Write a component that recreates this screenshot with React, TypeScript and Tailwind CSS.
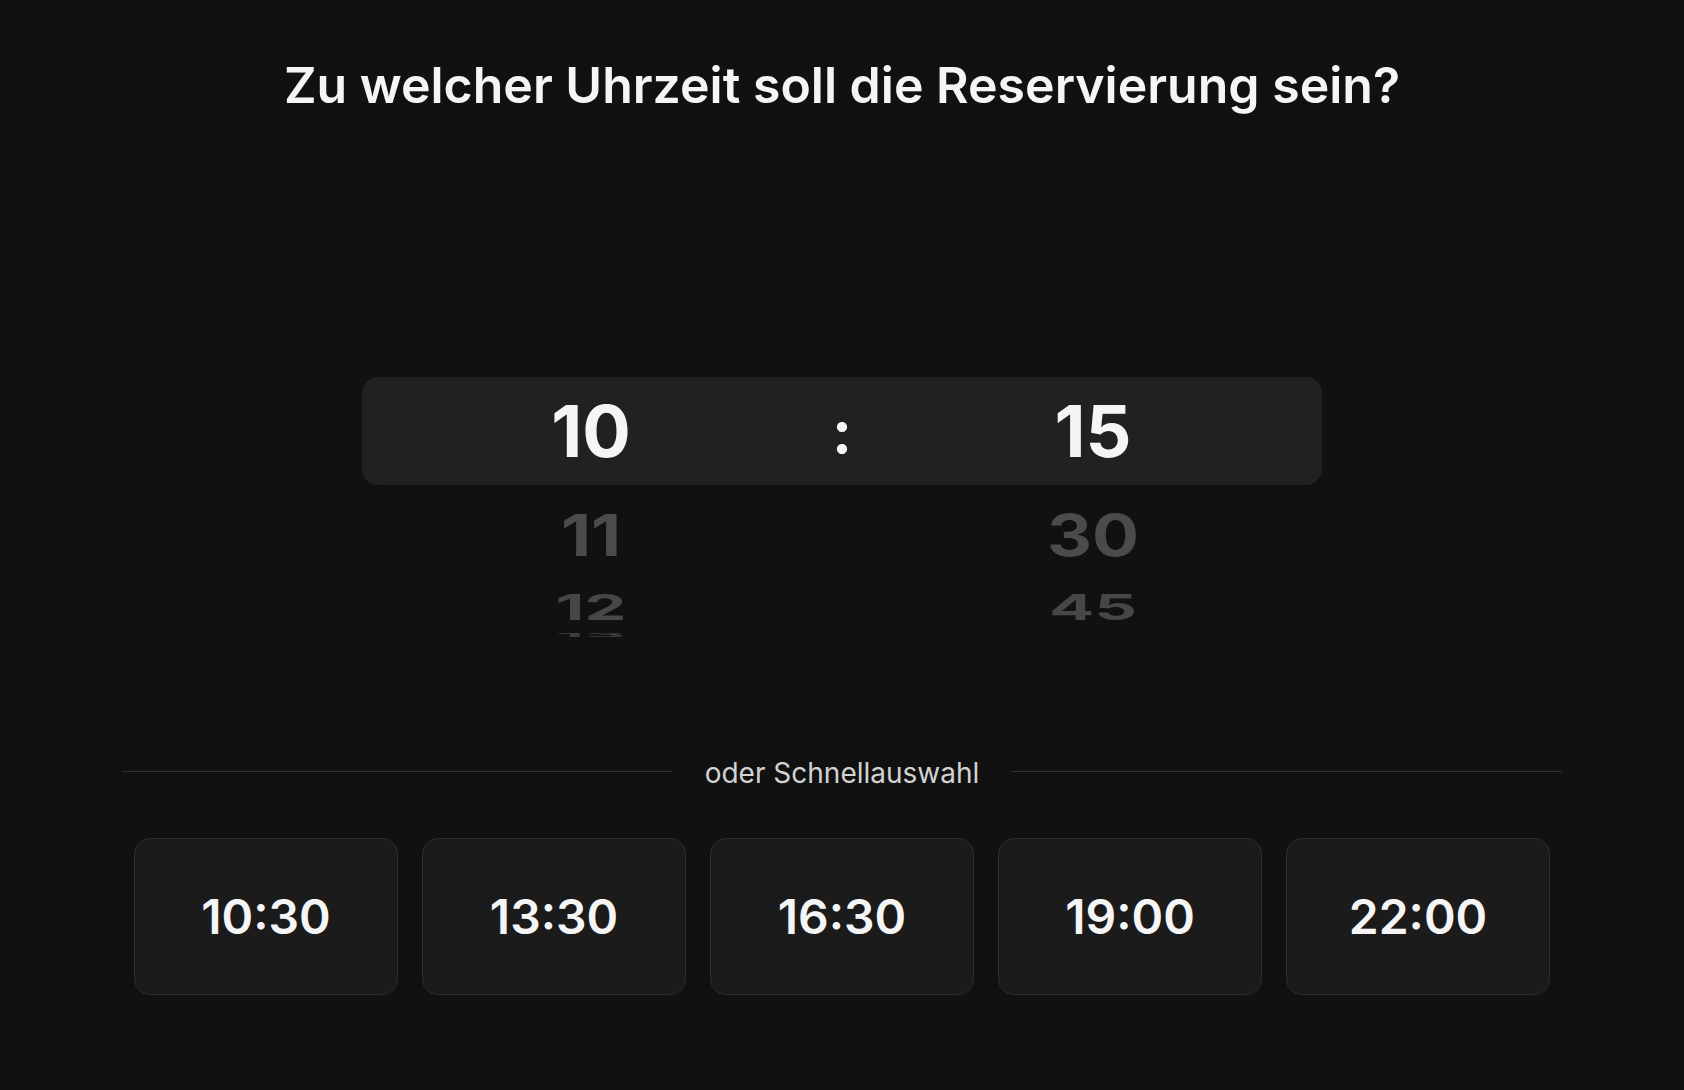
// Reservation time step: wheel-style hour/minute picker plus quick-pick buttons.

const QUICK_TIMES = ["10:30", "13:30", "16:30", "19:00", "22:00"];

// Rows that roll away below the selected one on the wheel.
const TRAILING_ROWS = [
  { hour: "11", minute: "30", box: "h-[100px]", squash: "scale-x-[0.97] scale-y-[0.8]", tone: "text-[#4b4b4b]" },
  { hour: "12", minute: "45", box: "h-[44px]", squash: "scale-x-[0.93] scale-y-[0.5]", tone: "text-[#474747]" },
  { hour: "13", minute: "", box: "h-[12px]", squash: "scale-x-[0.9] scale-y-[0.07]", tone: "text-[#3d3d3d]" },
];

export default function App() {
  return (
    <div className="min-h-screen bg-[#111111] font-['Inter','Noto_Sans',sans-serif] text-[#f5f5f5]">
      <h1 className="pt-[55px] text-center text-[50px] font-semibold leading-[60px]">
        Zu welcher Uhrzeit soll die Reservierung sein?
      </h1>

      {/* -- Wheel picker ------------------------------------------------ */}
      <div className="mx-auto mt-[262px] w-[960px]">
        <div className="flex h-[108px] items-center rounded-2xl bg-[#212121] text-[72px] font-bold leading-none">
          <span className="w-[458px] text-center">10</span>
          <span className="w-[44px] text-center text-[60px]">:</span>
          <span className="flex-1 text-center">15</span>
        </div>
        {TRAILING_ROWS.map((row) => (
          <div
            key={row.hour}
            className={`flex items-center text-[72px] font-bold leading-none ${row.box} ${row.tone}`}
          >
            <span className={`w-[458px] text-center ${row.squash}`}>{row.hour}</span>
            <span className="w-[44px]" />
            <span className={`flex-1 text-center ${row.squash}`}>{row.minute}</span>
          </div>
        ))}
      </div>

      {/* -- Quick picks ------------------------------------------------- */}
      <div className="mx-auto mt-[114px] w-[1440px]">
        <div className="flex h-8 items-center gap-8">
          <div className="h-px flex-1 bg-[#303030]" />
          <span className="mt-[4px] text-[28px] leading-8 text-[#d2d2d2]">oder Schnellauswahl</span>
          <div className="h-px flex-1 bg-[#303030]" />
        </div>
        <div className="mt-[51px] grid grid-cols-5 gap-6 px-3">
          {QUICK_TIMES.map((t) => (
            <button
              key={t}
              className="flex h-[157px] items-center justify-center rounded-2xl border border-[#2d2d2d] bg-[#1b1b1b] text-5xl font-semibold text-[#f5f5f5]"
            >
              {t}
            </button>
          ))}
        </div>
      </div>
    </div>
  );
}
